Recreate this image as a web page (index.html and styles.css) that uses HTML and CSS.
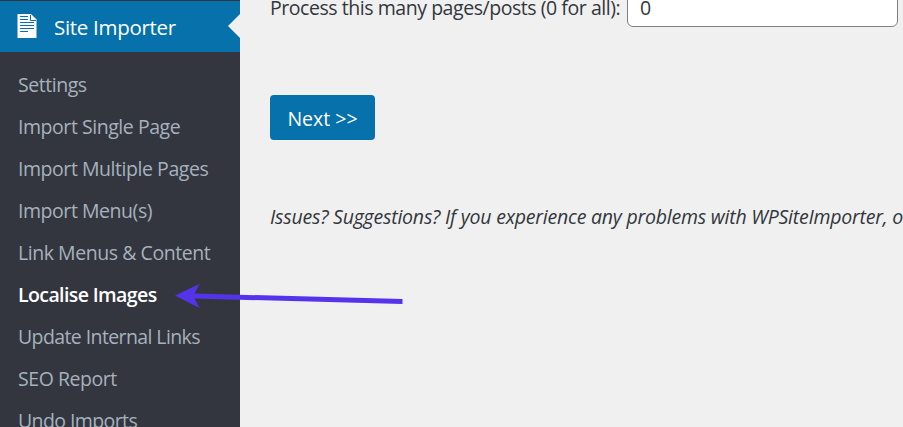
FILE: index.html
```html
<!DOCTYPE html>
<html lang="en">
<head>
<meta charset="utf-8">
<title>Site Importer</title>
<link rel="stylesheet" href="styles.css">
</head>
<body>
<div class="layout">
  <nav class="sidebar">
    <a class="menu-head">
      <svg class="doc-icon" width="20" height="25" viewBox="0 0 20 25">
        <path fill="#fff" d="M0.5 0H14L19.5 5.500V24H0.500Z"/>
        <path fill="none" stroke="#0671aa" stroke-width="1" d="M3 2.500H11M3 5.500H11M3 8.500H17M3 11.500H17M3 14.500H17M3 17.500H11M13.500 1V6.500H19"/>
      </svg>
      <span class="head-label">Site Importer</span>
    </a>
    <ul class="submenu">
      <li><span>Settings</span></li>
      <li><span>Import Single Page</span></li>
      <li><span>Import Multiple Pages</span></li>
      <li><span>Import Menu(s)</span></li>
      <li><span>Link Menus &amp; Content</span></li>
      <li class="current"><span>Localise Images</span></li>
      <li class="tight"><span>Update Internal Links</span></li>
      <li><span>SEO Report</span></li>
      <li class="tight"><span>Undo Imports</span></li>
    </ul>
  </nav>
  <main class="content">
    <div class="field">
      <label class="field-label" for="count">Process this many pages/posts (0 for all):</label>
      <input class="field-input" id="count" type="text" value="0">
    </div>
    <button class="next">Next &gt;&gt;</button>
    <p class="note">Issues? Suggestions? If you experience any problems with WPSiteImporter, or</p>
  </main>
  <svg class="arrow" width="232" height="30" viewBox="0 0 232 30">
    <path fill="#5533ea" d="M0 15.500L24.500 4L19.500 13.500L227.500 19V24L19.500 18.500L24.500 28Z"/>
  </svg>
</div>
</body>
</html>
```

FILE: styles.css
```css
* { box-sizing: border-box; }

body {
  margin: 0;
  overflow: hidden;
  background: #f0f0f0;
  font-family: "Open Sans", "Noto Sans", sans-serif;
  font-size: 19.5px;
  color: #32373c;
}

.layout {
  position: relative;
  display: flex;
  height: 427px;
  overflow: hidden;
}

.sidebar {
  flex: 0 0 240px;
  padding-top: 1px;
  background: #33363f;
}

.menu-head {
  position: relative;
  display: flex;
  align-items: center;
  height: 51px;
  padding: 1px 0 0 17px;
  background: #0671aa;
  color: #fff;
}

.menu-head::after {
  content: "";
  position: absolute;
  right: 0;
  top: 13px;
  border: 12px solid transparent;
  border-left: 0;
  border-right-color: #f0f0f0;
}

.doc-icon { margin-top: -2px; }

.head-label {
  margin-left: 17px;
  font-size: 20.5px;
  letter-spacing: -0.3px;
}

.submenu {
  margin: 0;
  padding: 12px 0 0 18px;
  list-style: none;
  color: #a5b2bd;
  letter-spacing: -0.45px;
}

.submenu li {
  height: 42px;
  line-height: 42px;
  white-space: nowrap;
}

.submenu .tight { letter-spacing: -0.6px; }

.submenu .current {
  color: #fff;
  font-weight: 600;
  letter-spacing: -0.6px;
}

.content {
  flex: 1;
  min-width: 0;
  padding-left: 30px;
}

.field {
  display: flex;
  align-items: center;
  height: 45px;
  margin-top: -18px;
}

.field-label {
  flex: 0 0 357px;
  padding-top: 6px;
  white-space: nowrap;
  letter-spacing: -0.45px;
}

.field-input {
  width: 271px;
  height: 45px;
  padding: 5px 12px 0;
  border: 1px solid #7e8085;
  border-radius: 6px;
  background: #fff;
  color: #32373c;
  font: inherit;
}

.next {
  display: block;
  width: 105px;
  height: 45px;
  margin-top: 68px;
  padding: 1px 0 0;
  border: 0;
  border-radius: 4px;
  background: #0671aa;
  color: #fff;
  font: inherit;
}

.note {
  margin: 63px 0 0;
  line-height: 28px;
  font-style: italic;
  white-space: nowrap;
  letter-spacing: -0.22px;
}

.arrow {
  position: absolute;
  left: 175px;
  top: 280px;
}
```
